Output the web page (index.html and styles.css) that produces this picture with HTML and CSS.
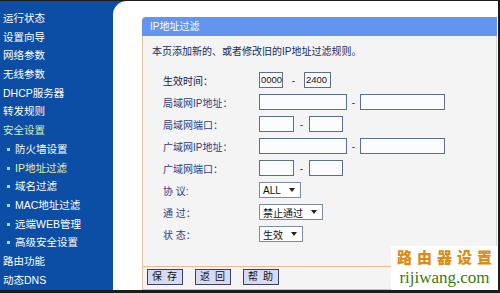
FILE: index.html
```html
<!DOCTYPE html>
<html lang="zh-CN">
<head>
<meta charset="utf-8">
<title>IP地址过滤</title>
<link rel="stylesheet" href="styles.css">
</head>
<body>
<div class="frame">
  <nav class="sidebar">
    <div class="item">运行状态</div>
    <div class="item">设置向导</div>
    <div class="item">网络参数</div>
    <div class="item">无线参数</div>
    <div class="item">DHCP服务器</div>
    <div class="item">转发规则</div>
    <div class="item open">安全设置</div>
    <div class="item sub">防火墙设置</div>
    <div class="item sub active">IP地址过滤</div>
    <div class="item sub">域名过滤</div>
    <div class="item sub">MAC地址过滤</div>
    <div class="item sub">远端WEB管理</div>
    <div class="item sub">高级安全设置</div>
    <div class="item">路由功能</div>
    <div class="item">动态DNS</div>
  </nav>
  <main class="main">
    <section class="panel">
      <div class="panel-head">IP地址过滤</div>
      <div class="panel-body">
        <p class="desc">本页添加新的、或者修改旧的IP地址过滤规则。</p>
        <div class="form">
          <div class="row"><span class="label strong">生效时间：</span><span class="field"><span class="input w-time">0000</span><span class="dash dash-time">-</span><span class="input w-time2">2400</span></span></div>
          <div class="row"><span class="label">局域网IP地址：</span><span class="field"><span class="input w-ip"></span><span class="dash dash-ip">-</span><span class="input w-ip2"></span></span></div>
          <div class="row"><span class="label">局域网端口：</span><span class="field"><span class="input w-port"></span><span class="dash dash-port">-</span><span class="input w-port2"></span></span></div>
          <div class="row"><span class="label">广域网IP地址：</span><span class="field"><span class="input w-ip"></span><span class="dash dash-ip">-</span><span class="input w-ip2"></span></span></div>
          <div class="row"><span class="label">广域网端口：</span><span class="field"><span class="input w-port"></span><span class="dash dash-port">-</span><span class="input w-port2"></span></span></div>
          <div class="row"><span class="label">协 议:</span><span class="field"><span class="select"><span class="sel-text">ALL</span><span class="caret"></span></span></span></div>
          <div class="row"><span class="label">通 过：</span><span class="field"><span class="select"><span class="sel-text">禁止通过</span><span class="caret"></span></span></span></div>
          <div class="row"><span class="label">状 态：</span><span class="field"><span class="select"><span class="sel-text">生效</span><span class="caret"></span></span></span></div>
        </div>
        <div class="spacer"></div>
        <div class="footer">
          <span class="btn">保 存</span>
          <span class="btn">返 回</span>
          <span class="btn">帮 助</span>
        </div>
      </div>
    </section>
    <div class="watermark">
      <div class="wm-cn">路由器设置</div>
      <div class="wm-en">rijiwang.com</div>
    </div>
  </main>
</div>
</body>
</html>
```

FILE: styles.css
```css
html, body {
  margin: 0;
  padding: 0;
}
body {
  width: 500px;
  height: 293px;
  overflow: hidden;
  background: #ffffff;
  font-family: "Liberation Sans", "Noto Sans CJK SC", sans-serif;
}
.frame {
  display: flex;
  width: 500px;
  height: 293px;
  box-sizing: border-box;
  background: #0c4ea6;
  border-top: 1px solid #1c1c1c;
  border-bottom: 3px solid #1c1c1c;
}
.sidebar {
  width: 113px;
  flex: none;
  padding-top: 8px;
  box-sizing: border-box;
}
.item {
  height: 18.7px;
  line-height: 18.7px;
  padding-left: 3px;
  color: #ffffff;
  font-size: 10.5px;
  white-space: nowrap;
}
.item.open {
  color: #cdeec0;
}
.item.sub {
  padding-left: 15px;
  position: relative;
}
.item.sub::before {
  content: "";
  position: absolute;
  left: 7px;
  top: 8px;
  width: 3px;
  height: 3px;
  background: #9fd8e8;
}
.item.active {
  color: #e8f0a0;
}
.main {
  flex: 1;
  position: relative;
  background: #ffffff;
  border-top-left-radius: 14px;
  border-right: 2px solid #1c1c1c;
  padding: 16px 1px 0 29px;
  display: flex;
  flex-direction: column;
}
.panel {
  flex: 1;
  display: flex;
  flex-direction: column;
}
.panel-head {
  height: 19px;
  line-height: 19px;
  background: #6294f0;
  color: #ffffff;
  font-size: 10px;
  padding-left: 8px;
  border-top-left-radius: 4px;
}
.panel-body {
  flex: 1;
  display: flex;
  flex-direction: column;
  background: #f4f4f4;
  border-left: 1px solid #efc4a0;
  border-right: 1px solid #d4d4d4;
  border-bottom: 1px solid #efb88c;
}
.desc {
  margin: 0;
  padding: 8px 0 0 9px;
  height: 16px;
  line-height: 16px;
  font-size: 10px;
  color: #1c2a58;
}
.form {
  margin-top: 9px;
  display: flex;
  flex-direction: column;
}
.row {
  height: 22px;
  display: flex;
  align-items: center;
}
.label {
  width: 96px;
  padding-left: 20px;
  font-size: 10px;
  color: #2c3f86;
  flex: none;
}
.label.strong {
  color: #16204a;
}
.field {
  display: flex;
  align-items: center;
}
.input {
  height: 14px;
  line-height: 14px;
  border: 1px solid #5f6d8c;
  background: #fbfcff;
  font-size: 10px;
  color: #111;
  padding-left: 2px;
  box-sizing: content-box;
  overflow: hidden;
  white-space: nowrap;
}
.w-time {
  width: 21px;
  padding-left: 1px;
  font-size: 9.5px;
}
.w-time2 {
  width: 24px;
  padding-left: 1px;
  font-size: 9.5px;
}
.w-ip { width: 84px; }
.w-ip2 { width: 81px; }
.w-port { width: 31px; }
.w-port2 { width: 30px; }
.dash {
  text-align: center;
  font-size: 10px;
  color: #333;
}
.dash-time {
  width: 7px;
  margin: 0 7px;
}
.dash-ip {
  width: 9px;
  margin: 0 2px;
}
.dash-port {
  width: 7px;
  margin: 0 4px;
}
.select {
  display: flex;
  align-items: center;
  height: 14px;
  border: 1px solid #7c8aa6;
  background: #ffffff;
  padding: 0 5px 0 3px;
  font-size: 10px;
  color: #111;
}
.sel-text {
  margin-right: 8px;
}
.caret {
  width: 0;
  height: 0;
  border-left: 3px solid transparent;
  border-right: 3px solid transparent;
  border-top: 4px solid #222;
}
.spacer {
  flex: 1;
}
.footer {
  border-top: 1px solid #efb88c;
  height: 23px;
  display: flex;
  align-items: flex-start;
  gap: 12px;
  padding: 2px 0 0 4px;
  box-sizing: border-box;
}
.btn {
  width: 34px;
  height: 14px;
  line-height: 14px;
  text-align: center;
  background: #d6daf2;
  border: 1px solid #3a3f60;
  font-size: 10px;
  color: #111;
  letter-spacing: 1px;
}
.watermark {
  position: absolute;
  right: 0;
  bottom: 0;
  width: 107px;
  height: 44px;
  background: #ffffff;
  text-align: center;
  display: flex;
  flex-direction: column;
  justify-content: flex-start;
}
.wm-cn {
  font-family: "Noto Sans CJK SC", sans-serif;
  font-weight: 900;
  font-size: 15px;
  line-height: 22px;
  height: 22px;
  white-space: nowrap;
  letter-spacing: 5px;
  padding-left: 5px;
  color: #e08a14;
}
.wm-en {
  font-family: "Liberation Serif", serif;
  font-size: 17px;
  line-height: 20px;
  height: 20px;
  color: #3c7a12;
}
```
